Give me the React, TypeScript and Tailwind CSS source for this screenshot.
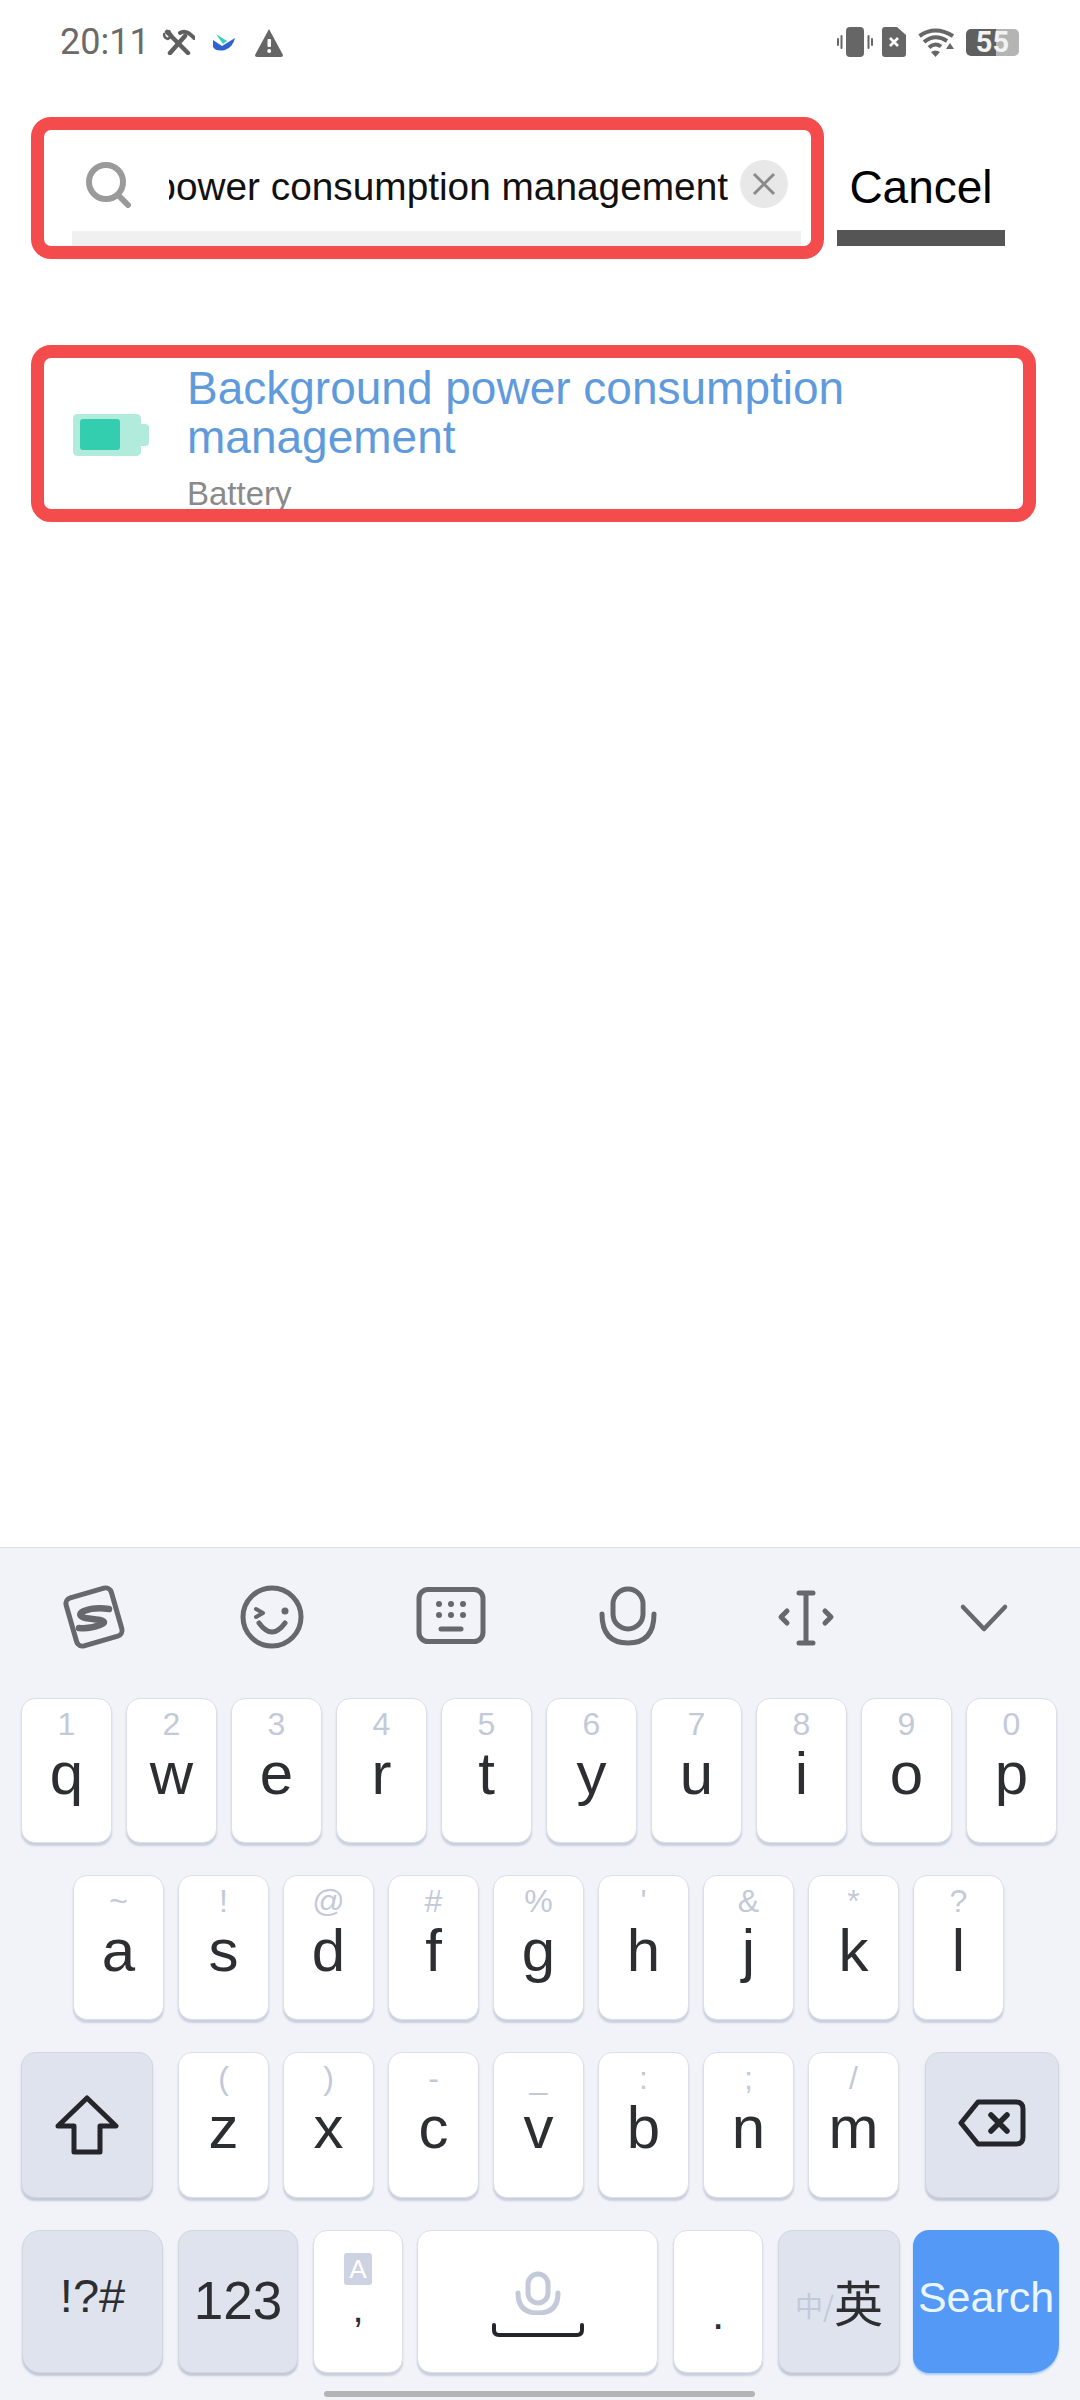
import React from "react";

const topRow = [
  ["1", "q"],
  ["2", "w"],
  ["3", "e"],
  ["4", "r"],
  ["5", "t"],
  ["6", "y"],
  ["7", "u"],
  ["8", "i"],
  ["9", "o"],
  ["0", "p"],
];

const midRow = [
  ["~", "a"],
  ["!", "s"],
  ["@", "d"],
  ["#", "f"],
  ["%", "g"],
  ["'", "h"],
  ["&", "j"],
  ["*", "k"],
  ["?", "l"],
];

const lowRow = [
  ["(", "z"],
  [")", "x"],
  ["-", "c"],
  ["_", "v"],
  [":", "b"],
  [";", "n"],
  ["/", "m"],
];

const LetterKey = ({ hint, letter }: { hint: string; letter: string }) => (
  <div className="w-[91px] h-full flex flex-col items-center pt-[9px] bg-white rounded-[14px] border border-[#dcdfe7] shadow-[0_3px_2px_#c9cfdd]">
    <span className="h-[32px] text-[32px] leading-[32px] text-[#c3c9d9]">{hint}</span>
    <span className="mt-[4px] h-[60px] text-[60px] leading-[60px] text-[#2d2e32]">{letter}</span>
  </div>
);

const ToolIcon = ({ children }: { children: React.ReactNode }) => (
  <svg
    viewBox="0 0 64 64"
    className="w-[64px] h-[64px] shrink-0 overflow-visible"
    fill="none"
    stroke="#67686d"
    strokeWidth="5"
    strokeLinecap="round"
    strokeLinejoin="round"
  >
    {children}
  </svg>
);

const StatusLeft = () => (
  <div className="flex items-center h-[30px]">
    <span className="w-[103px] text-[36px] leading-[30px] text-[#6a6a6a] font-['Roboto',sans-serif]">20:11</span>
    <svg viewBox="0 0 32 26" className="w-[32px] h-[26px]" fill="none" stroke="#5f5f5f" strokeLinecap="round">
      <path d="M4 3 L25 24" strokeWidth="4.5" />
      <path d="M7 24 L22 7" strokeWidth="4.5" />
      <path d="M17 4 Q23 0 31 9" strokeWidth="4" />
      <path d="M1 5 Q1 9 5 10 L9 7 L6 2" strokeWidth="2.5" />
    </svg>
    <svg viewBox="0 0 22 18" className="ml-[18px] w-[22px] h-[18px]">
      <path d="M3 1 L14 8 L10 11 Z" fill="#36cdbc" />
      <path d="M0 7 L9 13 L22 5 Q20 14 12 17 Q3 19 0 14 Z" fill="#2f62d0" />
    </svg>
    <svg viewBox="0 0 30 29" className="ml-[19px] w-[30px] h-[29px]">
      <path d="M15 1 L29 27 Q29 29 27 29 L3 29 Q1 29 1 27 Z" fill="#666666" />
      <rect x="13.5" y="11" width="3.5" height="8" rx="1" fill="#ffffff" />
      <circle cx="15.2" cy="23" r="2" fill="#ffffff" />
    </svg>
  </div>
);

const StatusRight = () => (
  <div className="flex items-center h-[30px]">
    <svg viewBox="0 0 36 30" className="w-[36px] h-[30px]" fill="#666666">
      <rect x="9" y="0" width="18" height="30" rx="4" />
      <rect x="3.5" y="8" width="2" height="14" rx="1" />
      <rect x="0" y="11" width="2" height="8" rx="1" />
      <rect x="30.5" y="8" width="2" height="14" rx="1" />
      <rect x="34" y="11" width="2" height="8" rx="1" />
    </svg>
    <svg viewBox="0 0 24 30" className="ml-[9px] w-[24px] h-[30px]">
      <path d="M3 0 L15 0 L24 8 L24 27 Q24 30 21 30 L3 30 Q0 30 0 27 L0 3 Q0 0 3 0 Z" fill="#666666" />
      <path d="M8 11 L16 19 M16 11 L8 19" stroke="#ffffff" strokeWidth="2.6" />
    </svg>
    <svg viewBox="0 0 37 29" className="ml-[12px] w-[37px] h-[29px]" fill="none" stroke="#666666" strokeWidth="4">
      <path d="M1.5 8 Q17 -3 35 8" />
      <path d="M6 14 Q17 5 29 13" />
      <path d="M11 19.5 Q17 14 23 18.5" />
      <path d="M13 24 L17.5 29 L22 24 Q17.5 21 13 24 Z" fill="#666666" stroke="none" />
      <path d="M28 21 L32 15 L36 21 Z" fill="#666666" stroke="none" />
    </svg>
    <div className="ml-[11px] w-[53px] h-[27px] flex items-center justify-center bg-[linear-gradient(90deg,#5f5f5f_56%,#b4b4b4_56%)] rounded-[5px] text-[29px] leading-[27px] font-bold text-[#f2f2f2] font-['Roboto',sans-serif]">
      55
    </div>
  </div>
);

export default function App() {
  return (
    <div className="w-[1080px] h-[2400px] flex flex-col bg-white font-['Liberation_Sans','Noto_Sans_CJK_SC',sans-serif]">
      <div className="flex justify-between h-[117px] pt-[27px] pl-[60px] pr-[61px]">
        <StatusLeft />
        <StatusRight />
      </div>

      <div className="flex ml-[31px] h-[142px]">
        <div className="w-[793px] flex flex-col border-[13px] border-[#f44c4c] rounded-[20px] overflow-hidden">
          <div className="flex-1 flex items-center pl-[40px] pr-[17px] pt-[7px]">
            <svg viewBox="0 0 48 46" className="mt-[2px] w-[48px] h-[46px] shrink-0" fill="none" stroke="#9a9a9a" strokeWidth="6" strokeLinecap="round">
              <circle cx="22" cy="20" r="17" />
              <path d="M34 33 L44 43" />
            </svg>
            <div className="ml-[37px] mt-[6px] w-[559px] flex justify-end overflow-hidden whitespace-nowrap text-[38.8px] leading-[48px] text-[#111111]">
              Background power consumption management
            </div>
            <div className="ml-[12px] w-[48px] h-[48px] flex items-center justify-center shrink-0 rounded-full bg-[#e8e8e8]">
              <svg viewBox="0 0 24 24" className="w-[24px] h-[24px]" stroke="#8a8a8a" strokeWidth="3">
                <path d="M2 2 L22 22 M22 2 L2 22" />
              </svg>
            </div>
          </div>
          <div className="h-[15px] ml-[28px] mr-[10px] bg-[#f0f0f0]"></div>
        </div>
        <div className="ml-[13px] w-[168px] h-[129px] flex flex-col items-center justify-end">
          <span className="mb-[19px] text-[46px] leading-[48px] text-black">Cancel</span>
          <div className="w-full h-[16px] bg-[#555555]"></div>
        </div>
      </div>

      <div className="ml-[31px] mt-[86px] w-[1005px] h-[177px] flex items-center border-[13px] border-[#f44c4c] rounded-[20px] overflow-hidden">
        <svg viewBox="0 0 76 42" className="ml-[29px] mt-[2px] w-[76px] h-[42px] shrink-0">
          <path d="M5 0 L63 0 Q68 0 68 5 L68 10 L72 10 Q76 10 76 14 L76 28 Q76 32 72 32 L68 32 L68 37 Q68 42 63 42 L5 42 Q0 42 0 37 L0 5 Q0 0 5 0 Z" fill="#b0ebdc" />
          <rect x="7" y="5" width="40" height="31" rx="3" fill="#33cdb0" />
        </svg>
        <div className="ml-[38px] mt-[6px] flex flex-col">
          <div className="w-[740px] text-[46px] leading-[49px] text-[#5f9bdc]">Background power consumption management</div>
          <div className="mt-[16px] text-[33px] leading-[32px] text-[#8a8a8a]">Battery</div>
        </div>
      </div>

      <div className="mt-auto h-[853px] flex flex-col bg-[#f1f3f8] border-t border-[#dddddd]">
        <div className="h-[150px] shrink-0 flex items-center pb-[12px] pl-[62px] gap-[114px]">
          <ToolIcon>
            <rect x="8.5" y="7" width="47" height="50" rx="6" transform="rotate(-16 32 32)" />
            <path d="M47 24 Q32 22 22 26 Q14 30 23 33 L38 35 Q46 37 38 40 Q28 44 17 43" strokeWidth="6.5" />
          </ToolIcon>
          <ToolIcon>
            <circle cx="32" cy="32" r="29" />
            <path d="M16 24 L23 28 L16 32" strokeWidth="4" />
            <circle cx="45" cy="26" r="3.5" fill="#67686d" stroke="none" />
            <path d="M19 38 Q32 56 45 38" />
          </ToolIcon>
          <ToolIcon>
            <rect x="1" y="4.5" width="64" height="52" rx="9" />
            <circle cx="21" cy="19" r="3" fill="#67686d" stroke="none" />
            <circle cx="33" cy="19" r="3" fill="#67686d" stroke="none" />
            <circle cx="45" cy="19" r="3" fill="#67686d" stroke="none" />
            <circle cx="21" cy="30" r="3" fill="#67686d" stroke="none" />
            <circle cx="33" cy="30" r="3" fill="#67686d" stroke="none" />
            <circle cx="45" cy="30" r="3" fill="#67686d" stroke="none" />
            <path d="M23 44 L43 44" />
          </ToolIcon>
          <ToolIcon>
            <rect x="17" y="4" width="30" height="40" rx="15" />
            <path d="M6 29 Q6 58 32 58 Q58 58 58 29" />
          </ToolIcon>
          <ToolIcon>
            <path d="M25 8 L39 8 M25 58 L39 58 M32 8 L32 58" />
            <path d="M13 26 L7 32 L13 38 M51 26 L57 32 L51 38" />
          </ToolIcon>
          <ToolIcon>
            <path d="M11 22 L32 44 L53 22" strokeWidth="4.5" />
          </ToolIcon>
        </div>

        <div className="flex flex-col gap-[32px] text-center">
          <div className="flex h-[145px] pl-[21px] gap-[14px]">
            {topRow.map(([hint, letter]) => (
              <LetterKey key={letter} hint={hint} letter={letter} />
            ))}
          </div>
          <div className="flex h-[145px] pl-[73px] gap-[14px]">
            {midRow.map(([hint, letter]) => (
              <LetterKey key={letter} hint={hint} letter={letter} />
            ))}
          </div>
          <div className="flex h-[146px] pl-[21px]">
            <div className="w-[132px] h-full flex items-center justify-center bg-[#dfe3ed] rounded-[14px] border border-[#d3d7e2] shadow-[0_3px_2px_#c2c8d8]">
              <svg viewBox="0 0 64 60" className="w-[64px] h-[60px]" fill="none" stroke="#24262b" strokeWidth="5" strokeLinejoin="round">
                <path d="M32 3 L61 31 L45 31 L45 57 L19 57 L19 31 L3 31 Z" />
              </svg>
            </div>
            <div className="ml-[25px] flex gap-[14px]">
              {lowRow.map(([hint, letter]) => (
                <LetterKey key={letter} hint={hint} letter={letter} />
              ))}
            </div>
            <div className="ml-[26px] w-[134px] h-full flex items-center justify-center pb-[4px] bg-[#dfe3ed] rounded-[14px] border border-[#d3d7e2] shadow-[0_3px_2px_#c2c8d8]">
              <svg viewBox="0 0 68 48" className="w-[68px] h-[48px]" fill="none" stroke="#24262b" strokeWidth="5" strokeLinejoin="round" strokeLinecap="round">
                <path d="M20 3 L58 3 Q65 3 65 10 L65 38 Q65 45 58 45 L20 45 L3 24 Z" />
                <path d="M33 16 L49 32 M49 16 L33 32" strokeWidth="5.5" />
              </svg>
            </div>
          </div>
          <div className="flex h-[143px] pl-[22px]">
            <div className="w-[141px] h-full flex items-center justify-center pb-[12px] bg-[#dfe3ed] rounded-[18px] border border-[#d3d7e2] shadow-[0_3px_2px_#c2c8d8] text-[47px] leading-[52px] text-[#2d2e32]">
              !?#
            </div>
            <div className="ml-[15px] w-[120px] h-full flex items-center justify-center pb-[2px] bg-[#dfe3ed] rounded-[14px] border border-[#d3d7e2] shadow-[0_3px_2px_#c2c8d8] text-[53px] leading-[56px] text-[#2d2e32]">
              123
            </div>
            <div className="ml-[15px] w-[90px] h-full flex flex-col items-center pt-[22px] bg-white rounded-[14px] border border-[#dcdfe7] shadow-[0_3px_2px_#c9cfdd]">
              <div className="w-[28px] h-[32px] flex items-center justify-center rounded-[3px] bg-[#cdd3e2] text-[26px] leading-[32px] text-white">A</div>
              <span className="mt-[7px] h-[32px] text-[40px] leading-[32px] text-[#2d2e32]">,</span>
            </div>
            <div className="ml-[14px] w-[241px] h-full flex flex-col items-center pt-[40px] bg-white rounded-[14px] border border-[#dcdfe7] shadow-[0_3px_2px_#c9cfdd]">
              <svg viewBox="0 0 46 44" className="w-[46px] h-[44px]" fill="none" stroke="#c3c9d9" strokeWidth="5" strokeLinecap="round">
                <rect x="13" y="3" width="20" height="29" rx="10" />
                <path d="M3 22 Q3 42 23 42 Q43 42 43 22" />
              </svg>
              <svg viewBox="0 0 92 14" className="mt-[8px] w-[92px] h-[14px]" fill="none" stroke="#24262b" strokeWidth="4" strokeLinecap="round">
                <path d="M2 2 L2 7 Q2 12 7 12 L85 12 Q90 12 90 7 L90 2" />
              </svg>
            </div>
            <div className="ml-[15px] w-[90px] h-full flex items-end justify-center pb-[36px] bg-white rounded-[14px] border border-[#dcdfe7] shadow-[0_3px_2px_#c9cfdd] text-[44px] leading-[44px] text-[#2d2e32]">
              .
            </div>
            <div className="ml-[15px] w-[122px] h-full flex items-center justify-center pb-[2px] bg-[#dfe3ed] rounded-[14px] border border-[#d3d7e2] shadow-[0_3px_2px_#c2c8d8]">
              <span className="mt-[8px] text-[28px] leading-[32px] text-[#c3c9d9] font-['Noto_Sans_CJK_SC',sans-serif]">中/</span>
              <span className="text-[49px] leading-[52px] text-[#2d2e32] font-['Noto_Sans_CJK_SC',sans-serif]">英</span>
            </div>
            <div className="ml-[13px] w-[146px] h-full flex items-center justify-center pb-[10px] bg-[#5599f7] rounded-[16px] rounded-br-[28px] shadow-[0_2px_2px_#a9cdf9] text-[43px] leading-[48px] text-[#eaf6ff]">
              Search
            </div>
          </div>
        </div>

        <div className="mt-[18px] ml-[324px] w-[431px] h-[6px] rounded-full bg-[#b4b4b4]"></div>
      </div>
    </div>
  );
}
